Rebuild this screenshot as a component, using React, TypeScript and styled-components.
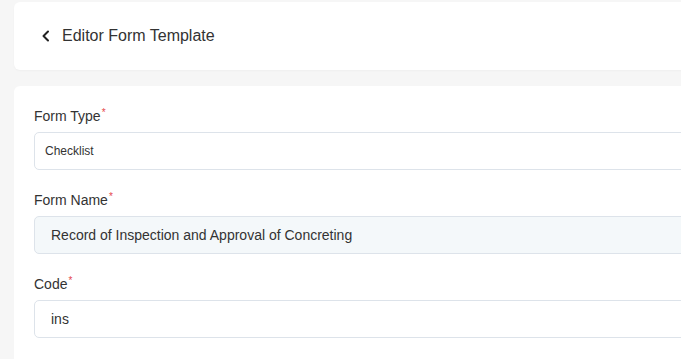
import React from "react";
import styled, { createGlobalStyle } from "styled-components";

const GlobalStyle = createGlobalStyle`
  html, body {
    margin: 0;
    padding: 0;
    background: #f6f6f6;
    overflow: hidden;
    font-family: "Liberation Sans", Arial, sans-serif;
    color: #333;
  }
`;

const Page = styled.div`
  display: flex;
  flex-direction: column;
  gap: 16px;
  padding: 2px 0 0 14px;
  width: 780px;
`;

const HeaderCard = styled.div`
  display: flex;
  align-items: center;
  gap: 10px;
  height: 68px;
  padding: 0 0 0 26px;
  background: #fff;
  border-radius: 6px;
  box-shadow: 0 1px 2px rgba(0, 0, 0, 0.03);
`;

const BackButton = styled.button`
  display: flex;
  align-items: center;
  justify-content: center;
  padding: 0;
  border: none;
  background: none;
  width: 12px;
  height: 16px;
  color: #222;
  cursor: pointer;
`;

const Title = styled.h1`
  margin: 0;
  font-size: 16px;
  font-weight: 400;
  color: #333;
  line-height: 20px;
`;

const FormCard = styled.div`
  display: flex;
  flex-direction: column;
  gap: 20px;
  padding: 20px 20px 20px 20px;
  background: #fff;
  border-radius: 6px;
  min-height: 300px;
`;

const Field = styled.div`
  display: flex;
  flex-direction: column;
  gap: 6px;
`;

const Label = styled.label`
  font-size: 14px;
  line-height: 20px;
  color: #333;
`;

const Required = styled.span`
  color: #e5484d;
  font-size: 10px;
  vertical-align: top;
  line-height: 14px;
  margin-left: 1px;
`;

const Box = styled.div<{ $disabled?: boolean; $pad: number; $size: number }>`
  display: flex;
  align-items: center;
  box-sizing: border-box;
  height: 38px;
  padding-left: ${(p) => p.$pad}px;
  border: 1px solid #dde3ea;
  border-radius: 5px;
  background: ${(p) => (p.$disabled ? "#f4f8fa" : "#fff")};
  font-size: ${(p) => p.$size}px;
  color: #333;
`;

export default function App() {
  return (
    <>
      <GlobalStyle />
      <Page>
        <HeaderCard>
          <BackButton aria-label="Back">
            <svg width="10" height="12" viewBox="0 0 10 12" fill="none">
              <path d="M7 1.5L2.5 6L7 10.5" stroke="#222" strokeWidth="2" strokeLinecap="round" strokeLinejoin="round" />
            </svg>
          </BackButton>
          <Title>Editor Form Template</Title>
        </HeaderCard>
        <FormCard>
          <Field>
            <Label>
              Form Type<Required>*</Required>
            </Label>
            <Box $pad={10} $size={12}>Checklist</Box>
          </Field>
          <Field>
            <Label>
              Form Name<Required>*</Required>
            </Label>
            <Box $pad={16} $size={14} $disabled>
              Record of Inspection and Approval of Concreting
            </Box>
          </Field>
          <Field>
            <Label>
              Code<Required>*</Required>
            </Label>
            <Box $pad={16} $size={14}>ins</Box>
          </Field>
        </FormCard>
      </Page>
    </>
  );
}
